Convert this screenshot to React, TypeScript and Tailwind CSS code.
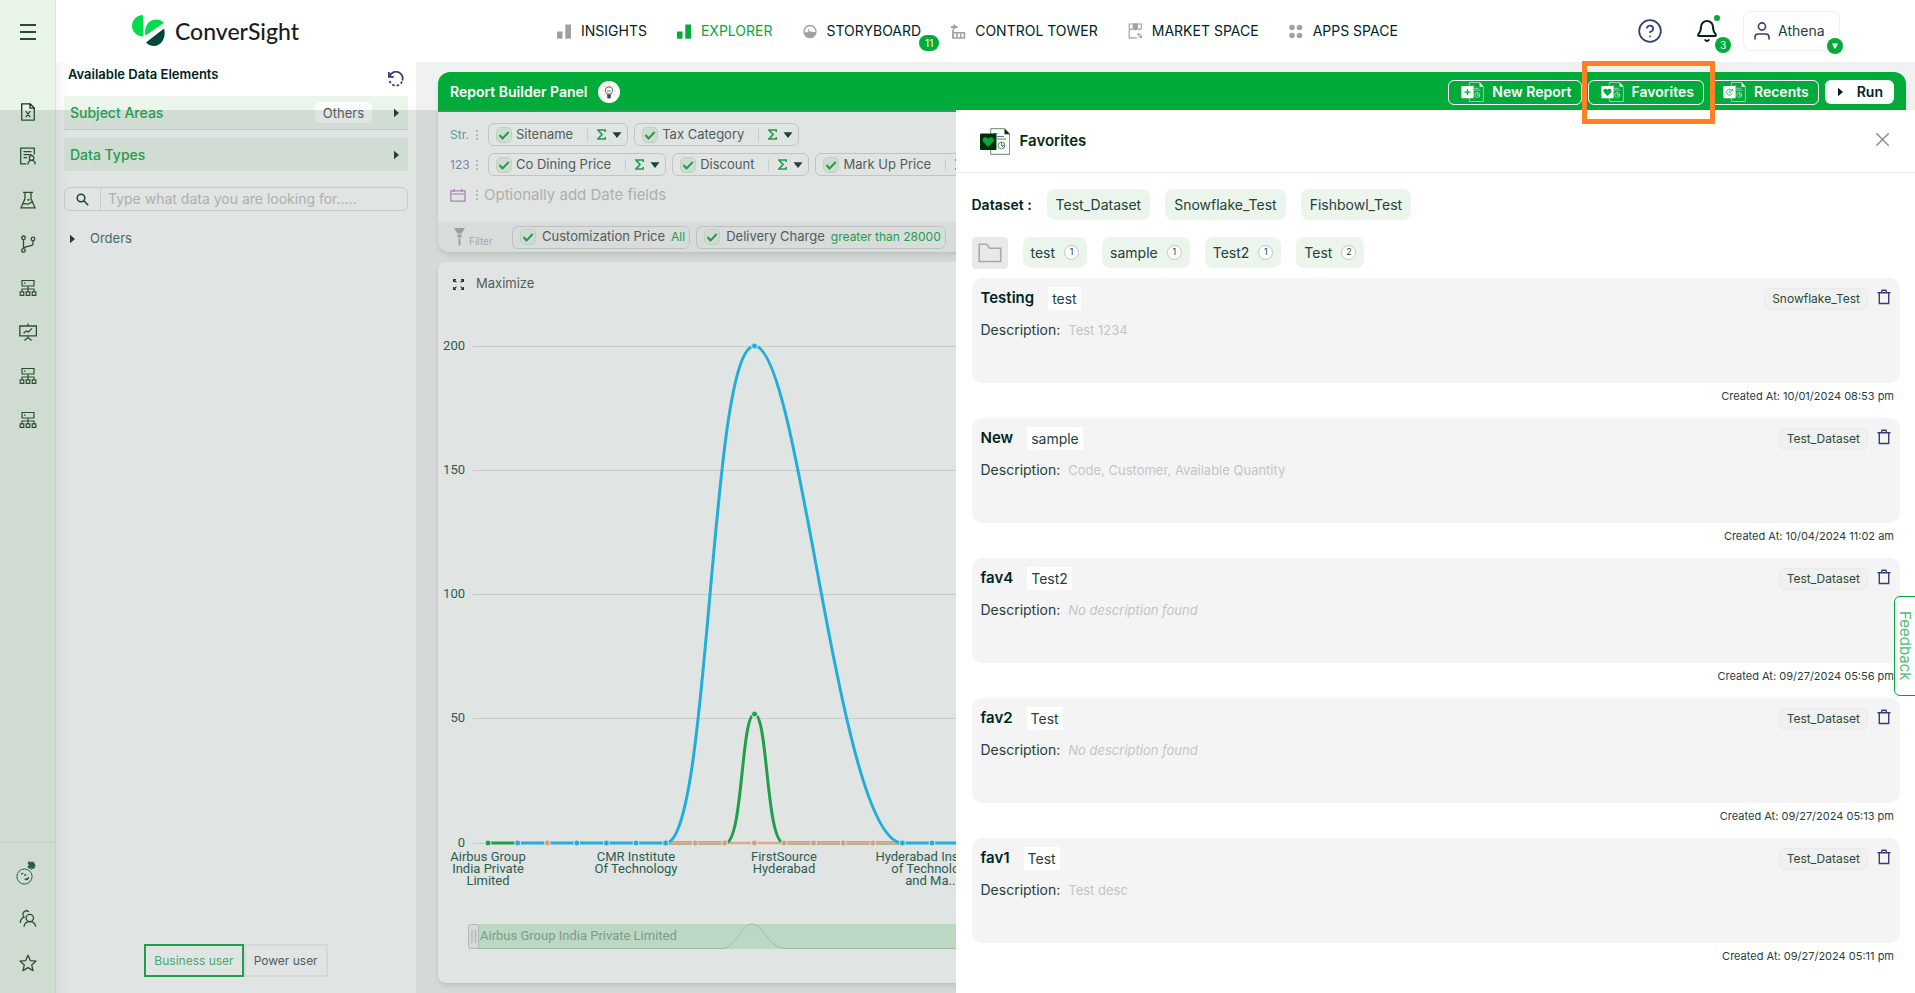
import React from 'react';
import clsx from 'clsx';
import { Bell, CircleHelp, X } from 'lucide-react';

interface Favorite {
  name: string;
  folder: string;
  description?: string;
  dataset: string;
  createdAt: string;
}

const FAVORITES: Favorite[] = [
  { name: 'Testing', folder: 'test', description: 'Test 1234', dataset: 'Snowflake_Test', createdAt: '10/01/2024 08:53 pm' },
  { name: 'New', folder: 'sample', description: 'Code, Customer, Available Quantity', dataset: 'Test_Dataset', createdAt: '10/04/2024 11:02 am' },
  { name: 'fav4', folder: 'Test2', dataset: 'Test_Dataset', createdAt: '09/27/2024 05:56 pm' },
  { name: 'fav2', folder: 'Test', dataset: 'Test_Dataset', createdAt: '09/27/2024 05:13 pm' },
  { name: 'fav1', folder: 'Test', description: 'Test desc', dataset: 'Test_Dataset', createdAt: '09/27/2024 05:11 pm' },
];

const DATASETS = ['Test_Dataset', 'Snowflake_Test', 'Fishbowl_Test'];

const FOLDERS = [
  { name: 'test', count: 1 },
  { name: 'sample', count: 1 },
  { name: 'Test2', count: 1 },
  { name: 'Test', count: 2 },
];

/* ---------- icons ---------- */

function Svg({ size = 18, children }: { size?: number; children: React.ReactNode }) {
  return (
    <svg width={size} height={size} viewBox="0 0 18 18" fill="none" stroke="currentColor" strokeWidth="1.3" aria-hidden="true">
      {children}
    </svg>
  );
}

const FileXIcon = () => (
  <Svg>
    <path d="M2.7.9h8.6l4 4v12.2H2.7z M11 1v4.2h4.2 M6.8 8.2l4.4 6 M11.2 8.2l-4.4 6" />
  </Svg>
);

const ReportUserIcon = () => (
  <Svg>
    <path d="M7.5 16.8H1.7V1.2h13.6v6.3 M4.5 4.6h8 M4.5 7.6h8 M4.5 10.7h3.5" />
    <circle cx="12.6" cy="11" r="2.3" />
    <path d="M9 17.4c.1-2.6 1.6-4 3.6-4s3.5 1.4 3.7 4" />
  </Svg>
);

const FlaskIcon = () => (
  <Svg>
    <path d="M4 1.4h10 M6 1.5v6L2 16.8h14l-4-9.300v-6 M4.4 13.2c2.3-1.5 3.5.6 5.4-.3 1.4-.7 2-1.8 3.7-1.8" />
    <circle cx="9.5" cy="8.8" r=".5" fill="currentColor" />
  </Svg>
);

const BranchIcon = () => (
  <Svg>
    <circle cx="4.5" cy="2.8" r="1.8" />
    <circle cx="4.5" cy="15.4" r="1.8" />
    <circle cx="14" cy="4" r="1.8" />
    <path d="M4.5 4.7v8.8 M14 5.9v3c0 1-.6 1.3-1.5 1.5l-8 2.2" />
  </Svg>
);

const ServerTreeIcon = () => (
  <Svg>
    <g strokeWidth="1.2">
      <path d="M3 1.5h12v5.500H3z M9 7v5.500 M3 12.500v-2.500h12v2.500 M1.2 12.800h3.600v3.600H1.200z M7.200 12.800h3.600v3.600H7.200z M13.200 12.800h3.600v3.600h-3.600z" />
      <path d="M5 4.2h1.5" />
    </g>
  </Svg>
);

const BoardIcon = () => (
  <Svg>
    <path d="M.8 3h16.6v9.8H.8z M9 .6V3 M9 13v1.5 M5.4 17.5l3.6-3 3.6 3" />
    <path d="M4.6 10.2l2.8-2.4 1.8 1.4 3.8-3.8" />
  </Svg>
);

const TeamIcon = () => (
  <Svg>
    <circle cx="10.8" cy="8" r="3.7" />
    <path d="M5 16.8c.3-3.3 2.7-5.1 5.8-5.1s5.5 1.8 5.8 5.1 M9.8 1.8C7.5-.4 3.8 1.2 3.9 4.4c0 1.3.5 2.1 1.2 2.7C2.7 8 1.4 10 1.2 13" />
  </Svg>
);

const StarIcon = () => (
  <Svg>
    <path d="M9 1.3l2.300 5.300 5.800.5-4.400 3.800 1.300 5.700L9 13.600l-5 3 1.300-5.700L.9 7.100l5.800-.5z" strokeLinejoin="round" />
  </Svg>
);

const ChefIcon = () => (
  <svg width="20" height="24" viewBox="0 0 20 24" fill="none" stroke="#0a4a40" strokeWidth="1" aria-hidden="true">
    <circle cx="8.5" cy="15.5" r="7.6" />
    <path d="M12 1.2h5.500l.8 2 1 1-1 1.300.2 1.200-1.200.8-5-1.500.8-2.200z" fill="#0a4a40" />
    <path d="M11.5 6l4.5 2.5" />
    <path d="M5.5 13.500c.2-1.300 1.200-1.500 1.700-.6 M8.500 14.800c.2-1.300 1.200-1.500 1.700-.6 M9.300 18.300c1.200.6 2.700 0 3.200-1.500z" strokeWidth="1.2" />
  </svg>
);

/** Sheet of paper with a square badge in front of it. */
function ReportGlyph({ badge, className, paper, line, square, mark }: {
  badge: 'plus' | 'heart' | 'clock';
  className: string;
  paper: string;
  line: string;
  square: string;
  mark: string;
}) {
  return (
    <svg className={className} viewBox="0 0 30 27" fill="none" aria-hidden="true">
      <path d="M10.7.7h14l5 5.300v20.300h-19z" fill={paper} stroke={line} strokeWidth="1" />
      <path d="M24.5.5v5.800h5.200z" fill={square} />
      <path d="M13.5 5.5h4 M17 8.5h7 M17 11h9" stroke={line} strokeWidth="1" />
      <circle cx="21.5" cy="17.5" r="3.4" stroke={line} strokeWidth="1" />
      <path d="M21.5 14v3.5H25 M21.5 17.5l2.4 2.4" stroke={line} strokeWidth="1" />
      <rect x="0" y="5.5" width="16.5" height="16.5" rx="1" fill={square} />
      {badge === 'heart' && (
        <path d="M8.2 18.8L3.6 14.2c-1.6-1.7-1-4.6 1.300-5 1.500-.2 2.600.5 3.300 1.500.7-1 1.800-1.700 3.300-1.500 2.300.4 2.900 3.300 1.300 5z" fill={mark} />
      )}
      {badge === 'plus' && <path d="M8.2 9.5v8.5 M4 13.7h8.5" stroke={mark} strokeWidth="1.8" />}
      {badge === 'clock' && (
        <path d="M11.5 11.2a4 4 0 1 0 .6 4 M12.4 9.3v2.600H9.8 M8 11.5v2.500h2" stroke={mark} strokeWidth="1.1" />
      )}
    </svg>
  );
}

function BarsIcon() {
  return (
    <svg width="15" height="15" viewBox="0 0 15 15" fill="currentColor" aria-hidden="true">
      <path d="M0 7.5h5.500v7.200H0z" />
      <path d="M8.3.5h5.700v14.200H8.300z" />
    </svg>
  );
}

function GaugeIcon() {
  return (
    <svg width="15" height="15" viewBox="0 0 15 15" aria-hidden="true">
      <circle cx="7" cy="7.5" r="6" fill="none" stroke="currentColor" strokeWidth="1.3" />
      <path d="M.9 8.3h4.400l-.4-4 2 3.300 6.200.7c0 3.500-2.500 5.600-6.100 5.600S.9 11.800.9 8.300z" fill="currentColor" />
    </svg>
  );
}

function TowerIcon() {
  return (
    <svg width="15" height="15" viewBox="0 0 15 15" fill="none" stroke="currentColor" aria-hidden="true">
      <path d="M0 3h6.5 M3.3.5V5" strokeWidth="2" />
      <path d="M2.2 5v9h11.200V8.800H2.200" strokeWidth="1.6" />
      <path d="M6 9v5 M9.7 9v5 M2 7v7" strokeWidth="1.5" />
    </svg>
  );
}

function MarketIcon() {
  return (
    <svg width="15" height="16" viewBox="0 0 15 16" fill="none" stroke="currentColor" strokeWidth="1.2" aria-hidden="true">
      <path d="M1.3 1h12v4.500c-1.400 1.500-3 1.300-3.800 0-1 1.400-3.200 1.400-4.200 0-1 1.300-2.900 1.300-4 0z" />
      <path d="M5.5 1h3.600l.4 4.500-2.200 1-2.200-1z" fill="currentColor" />
      <path d="M1.2 6.5v8.300H8.8" />
      <circle cx="10.5" cy="11.2" r=".6" />
      <circle cx="13" cy="14" r=".6" />
      <path d="M13.3 11l-3 3.5" strokeWidth="1" />
    </svg>
  );
}

function AppsIcon() {
  return (
    <svg width="15" height="15" viewBox="0 0 15 15" fill="currentColor" aria-hidden="true">
      <circle cx="3" cy="3.5" r="2.8" />
      <circle cx="10.5" cy="3.5" r="2.8" />
      <circle cx="3" cy="11.5" r="2.8" />
      <circle cx="10.5" cy="11.5" r="2.8" />
    </svg>
  );
}

const UserIcon = () => (
  <svg width="16" height="18" viewBox="0 0 16 18" fill="none" stroke="#353d76" strokeWidth="1.6" aria-hidden="true">
    <circle cx="8" cy="4.5" r="3.6" />
    <path d="M1 17.5v-2.300c0-2 1.400-3.200 3.300-3.200h7.400c1.900 0 3.300 1.200 3.300 3.200v2.300" />
  </svg>
);

const TrashIcon = () => (
  <svg width="14" height="16" viewBox="0 0 14 16" fill="none" stroke="#353d76" strokeWidth="1.4" aria-hidden="true">
    <path d="M.5 3.7h13 M4.5 3.5l.6-2.300h3.800l.6 2.300 M2.3 3.7v10.800h9.400V3.700" />
  </svg>
);

const Caret = ({ right }: { right?: boolean }) => (
  <svg width="10" height="10" viewBox="0 0 10 10" fill="#00241f" aria-hidden="true">
    {right ? <path d="M2 .8L7 5 2 9.2z" /> : <path d="M.5 2.2h9L5 8z" />}
  </svg>
);

const Dots = () => (
  <svg width="2" height="10" viewBox="0 0 2 10" fill="#c2c2c2" aria-hidden="true">
    <path d="M0 0h2v2H0z M0 4h2v2H0z M0 8h2v2H0z" />
  </svg>
);

const CheckBadge = () => (
  <svg width="16" height="16" viewBox="0 0 16 16" fill="none" aria-hidden="true">
    <rect x=".5" y=".5" width="15" height="15" rx="4.5" fill="#eaf5ea" stroke="#cfe6d3" />
    <path d="M3.5 8l3 3.5L12.7 5" stroke="#00a136" strokeWidth="2" />
  </svg>
);

/* ---------- shell ---------- */

const RAIL = [
  { label: 'Excel reports', Icon: FileXIcon },
  { label: 'Reports', Icon: ReportUserIcon },
  { label: 'Lab', Icon: FlaskIcon },
  { label: 'Flows', Icon: BranchIcon },
  { label: 'Servers', Icon: ServerTreeIcon },
  { label: 'Presentations', Icon: BoardIcon },
  { label: 'Clusters', Icon: ServerTreeIcon },
  { label: 'Nodes', Icon: ServerTreeIcon },
];

function Rail() {
  return (
    <aside className="flex w-14 shrink-0 flex-col border-r border-[#d8e6da] bg-[#eaf5ea] text-[#0a3a10]">
      <button type="button" aria-label="Menu" className="mx-auto mt-6 flex h-4 w-4 flex-col justify-between">
        <span className="h-[2px] w-full bg-[#2c4a30]" />
        <span className="h-[2px] w-full bg-[#2c4a30]" />
        <span className="h-[2px] w-full bg-[#2c4a30]" />
      </button>
      <nav className="mt-[50px] flex flex-col">
        {RAIL.map(({ label, Icon }) => (
          <button key={label} type="button" aria-label={label} className="flex h-11 items-center justify-center">
            <Icon />
          </button>
        ))}
      </nav>
      <div className="mt-auto flex flex-col border-t border-[#d8e6da] pt-2 pb-[10px]">
        <button type="button" aria-label="Assistant" className="flex h-11 items-center justify-center pr-1">
          <ChefIcon />
        </button>
        <button type="button" aria-label="Team" className="flex h-12 items-center justify-center">
          <TeamIcon />
        </button>
        <button type="button" aria-label="Starred" className="flex h-10 items-center justify-center">
          <StarIcon />
        </button>
      </div>
    </aside>
  );
}

const NAV = [
  { label: 'INSIGHTS', Icon: BarsIcon },
  { label: 'EXPLORER', Icon: BarsIcon, active: true },
  { label: 'STORYBOARD', Icon: GaugeIcon, badge: 11 },
  { label: 'CONTROL TOWER', Icon: TowerIcon },
  { label: 'MARKET SPACE', Icon: MarketIcon },
  { label: 'APPS SPACE', Icon: AppsIcon },
];

function Header() {
  return (
    <header className="flex h-[62px] shrink-0 items-center bg-white pr-[75px]">
      <div className="flex w-[501px] items-center gap-[10px] pl-[76px]">
        <svg width="33" height="32" viewBox="0 0 33 32" aria-hidden="true">
          <path d="M11 0v21.5C5 21.5 0 16.8 0 10.8S5 0 11 0z" fill="#00dc4b" />
          <path d="M13.5 20.5c-1.800-7.500 2.300-16 10.300-16 3.300 0 6.300 1.200 8.200 3.300z" fill="#00dc4b" />
          <path d="M14 27.5L32 13.5c2.500 8-2 17.500-10 17.500-3.200 0-6-1.200-8-3.500z" fill="#00463a" />
        </svg>
        <span className="font-['Lato',sans-serif] text-[23px] leading-8 font-medium text-[#1c1c1e]">ConverSight</span>
      </div>
      <nav className="flex items-center gap-[30px]">
        {NAV.map(({ label, Icon, active, badge }) => (
          <a
            key={label}
            href="#"
            className={clsx('relative flex items-center gap-[9px] text-sm', active ? 'text-[#00ab39]' : 'text-[#00241f]')}
          >
            <span className={active ? 'text-[#00ab39]' : 'text-[#a3a0a1]'}>
              <Icon />
            </span>
            {label}
            {badge && (
              <span className="absolute top-[14px] -right-[18px] flex h-4 w-5 items-center justify-center rounded-full bg-[#00ab39] text-[10px] text-white">
                {badge}
              </span>
            )}
          </a>
        ))}
      </nav>
      <div className="ml-auto flex items-center">
        <button type="button" aria-label="Help" className="text-[#353d76]">
          <CircleHelp size={26} strokeWidth={1.6} />
        </button>
        <button type="button" aria-label="Notifications" className="relative ml-8 text-[#00241f]">
          <Bell size={24} strokeWidth={2} />
          <span className="absolute -top-[4px] -right-[1px] h-[6px] w-[6px] rounded-full bg-[#00ab39]" />
          <span className="absolute top-[18px] -right-[12px] flex h-4 w-4 items-center justify-center rounded-full bg-[#00ab39] text-[10px] text-white">3</span>
        </button>
        <button type="button" className="relative ml-6 flex h-10 w-[97px] items-center gap-2 rounded-lg border border-[#efefef] pl-[10px] text-sm text-[#26403d]">
          <UserIcon />
          Athena
          <span className="absolute top-[26px] -right-[4px] flex h-4 w-4 items-center justify-center rounded-full bg-[#00ab39]">
            <svg width="6" height="6" viewBox="0 0 6 6" fill="#fff" aria-hidden="true"><path d="M0 .5h6L3.5 5.5h-1z" /></svg>
          </span>
        </button>
      </div>
    </header>
  );
}

function DataPanel() {
  return (
    <section className="flex w-[360px] shrink-0 flex-col bg-gradient-to-r from-[#f4f4f4] via-white via-[4%] to-white px-2 text-[#00241f]">
      <div className="flex h-[34px] items-center justify-between pr-1 pl-1">
        <h2 className="pb-2 text-[13px] font-semibold">Available Data Elements</h2>
        <button type="button" aria-label="Reset" className="pl-px">
          <svg width="16" height="16" viewBox="0 0 16 16" fill="none" stroke="#353d76" strokeWidth="1.8" aria-hidden="true">
            <path d="M1.8 5.2A6.5 6.5 0 0 1 14.3 9.5" />
            <path d="M14 10.5A6.5 6.5 0 0 1 1.7 10" strokeDasharray="2.5 2" />
            <path d="M.9 1v4.9h5" />
          </svg>
        </button>
      </div>
      <div className="flex h-[34px] items-center border-b border-[#d3dfd5] bg-[#ebf5eb] px-[6px]">
        <span className="text-sm font-medium text-[#00a136]">Subject Areas</span>
        <button type="button" className="mr-5 ml-auto h-[21px] rounded-md bg-white px-2 text-[13px] leading-5 text-[#3f4b49]">
          Others
        </button>
        <Caret right />
      </div>
      <div className="mt-2 flex h-[33px] items-center justify-between bg-[#ebf5eb] px-[6px]">
        <span className="text-sm font-medium text-[#00a136]">Data Types</span>
        <Caret right />
      </div>
      <label className="mt-4 flex h-6 items-center rounded-md border border-[#dcdcdc]">
        <span className="flex h-full w-9 items-center justify-center border-r border-[#dcdcdc] text-[#00241f]">
          <svg width="13" height="13" viewBox="0 0 13 13" fill="none" stroke="currentColor" strokeWidth="1.5" aria-hidden="true">
            <circle cx="5" cy="5" r="3.8" />
            <path d="M7.8 7.8l4.4 4.4" />
          </svg>
        </span>
        <input
          aria-label="Search data elements"
          placeholder="Type what data you are looking for....."
          className="min-w-0 flex-1 bg-transparent px-[7px] text-sm outline-none placeholder:text-[#bababa]"
        />
      </label>
      <button type="button" className="mt-[18px] flex h-5 items-center gap-3 pl-1 text-[13px] text-[#2d5a5a]">
        <Caret right />
        Orders
      </button>
      <div className="mt-auto mb-4 flex justify-center">
        <button type="button" className="h-[33px] border-2 border-[#00a136] px-2 text-xs text-[#2fb45d]">Business user</button>
        <button type="button" className="h-[33px] border-2 border-[#efefef] px-2 text-xs text-[#3f4b49]">Power user</button>
      </div>
    </section>
  );
}

function FieldChip({ label }: { label: string }) {
  return (
    <div className="flex h-[23px] shrink-0 items-center rounded-md border border-[#d5d5d5] pr-[5px] pl-[7px]">
      <CheckBadge />
      <span className="ml-1 text-[13px] text-[#3f4b49]">{label}</span>
      <span className="ml-[14px] h-3 w-px bg-[#dcdcdc]" />
      <button type="button" aria-label={`Aggregate ${label}`} className="ml-[9px] flex items-center gap-[6px]">
        <svg width="9" height="11" viewBox="0 0 9 11" fill="none" stroke="#00a136" strokeWidth="1.7" aria-hidden="true">
          <path d="M8.3 3V1H1l4 4.5-4 4.5h7.300V8" />
        </svg>
        <Caret />
      </button>
    </div>
  );
}

function FilterChip({ label, condition }: { label: string; condition: string }) {
  return (
    <div className="flex h-[23px] shrink-0 items-center rounded-md border border-[#d0d0d0] pr-1 pl-[7px] text-[13px]">
      <CheckBadge />
      <span className="ml-[6px] text-[#3f4b49]">{label}</span>
      <span className="ml-[6px] text-xs text-[#00a136]">{condition}</span>
    </div>
  );
}

function OutlineButton({ badge, children }: { badge: 'plus' | 'heart' | 'clock'; children: React.ReactNode }) {
  return (
    <button type="button" className="flex h-[25px] items-center gap-2 rounded-md border border-white pr-[9px] pl-3 text-sm font-semibold text-white">
      <ReportGlyph badge={badge} className="h-5 w-[23px]" paper="none" line="#b5e5c3" square="#fff" mark="#00ab39" />
      {children}
    </button>
  );
}

function ReportBuilder() {
  return (
    <section className="rounded-xl bg-white shadow-md">
      <div className="flex h-10 items-center gap-[11px] rounded-t-xl bg-[#00ab39] px-3">
        <h2 className="text-sm font-semibold text-white">Report Builder Panel</h2>
        <span className="flex h-[22px] w-[22px] items-center justify-center rounded-full bg-white">
          <svg width="14" height="16" viewBox="0 0 14 16" fill="none" aria-hidden="true">
            <circle cx="7" cy="6.5" r="3.6" stroke="#777" strokeWidth="1.1" />
            <path d="M5 7h4" stroke="#777" />
            <path d="M5 10.5h4l-.5 4h-3z" fill="#444" />
            <path d="M7 0v1.5 M2 2l1 1 M12 2l-1 1 M0 7h1.5 M12.5 7H14 M1.5 11l1-.7 M12.5 11l-1-.7" stroke="#f3a978" />
          </svg>
        </span>
        <div className="ml-auto flex items-center gap-[6px]">
          <OutlineButton badge="plus">New Report</OutlineButton>
          <div className="relative">
            <OutlineButton badge="heart">Favorites</OutlineButton>
            <span className="pointer-events-none absolute -top-[19px] -right-[11px] -bottom-[19px] -left-[6px] z-50 border-5 border-[#ff8026]" />
          </div>
          <OutlineButton badge="clock">Recents</OutlineButton>
          <button type="button" className="flex h-6 items-center gap-[11px] rounded-md bg-white px-[11px] text-sm font-semibold text-[#00241f]">
            <Caret right />
            Run
          </button>
        </div>
      </div>
      <div className="flex h-[110px] flex-col gap-[7px] pt-[11px] pl-3">
        <div className="flex h-[23px] items-center gap-[6px]">
          <span className="w-5 text-xs text-[#4d98a5]">Str.</span>
          <Dots />
          <div className="ml-1 flex gap-[6px]">
            <FieldChip label="Sitename" />
            <FieldChip label="Tax Category" />
          </div>
        </div>
        <div className="flex h-[23px] items-center gap-[6px]">
          <span className="w-5 text-xs text-[#7d82b8]">123</span>
          <Dots />
          <div className="ml-1 flex gap-[6px]">
            <FieldChip label="Co Dining Price" />
            <FieldChip label="Discount" />
            <FieldChip label="Mark Up Price" />
          </div>
        </div>
        <div className="flex h-6 items-center gap-[6px]">
          <span className="w-5">
            <svg width="16" height="13" viewBox="0 0 16 13" fill="none" stroke="#b57cc4" strokeWidth="1.2" aria-hidden="true">
              <path d="M.8 1.8h14.200v10.400H.8z M.8 5h14.200 M4 0v3 M11.8 0v3" />
            </svg>
          </span>
          <Dots />
          <span className="text-[15px] text-[#bababa]">Optionally add Date fields</span>
        </div>
      </div>
      <div className="flex h-[30px] items-center gap-[6px] rounded-b-xl bg-[#f4f4f4] pl-4">
        <div className="flex w-[52px] items-center text-[10px] text-[#b0b0b0]">
          <svg width="11" height="18" viewBox="0 0 11 18" fill="#a3a3a3" aria-hidden="true">
            <path d="M0 0h11L7.5 5.5h-4z M3.5 6.5h4v3h-4z M4.5 10.5h2v7h-2z" />
          </svg>
          <span className="pt-2 pl-1">Filter</span>
        </div>
        <FilterChip label="Customization Price" condition="All" />
        <FilterChip label="Delivery Charge" condition="greater than 28000" />
      </div>
    </section>
  );
}

/* ---------- chart ---------- */

const ORIGIN = 50;
const STEP = 29.6;
const BASE = 581;

const Y_TICKS = [
  { value: 200, y: 84 },
  { value: 150, y: 208 },
  { value: 100, y: 332 },
  { value: 50, y: 456 },
  { value: 0, y: BASE },
];

const X_LABELS = [
  { at: 0, lines: ['Airbus Group', 'India Private', 'Limited'] },
  { at: 5, lines: ['CMR Institute', 'Of Technology'] },
  { at: 10, lines: ['FirstSource', 'Hyderabad'] },
  { at: 15, lines: ['Hyderabad Institute', 'of Technology', 'and Ma...'] },
];

const MARKERS = Array.from({ length: 17 }, (_, i) => {
  if (i === 0) return '#00a136';
  if (i === 2 || (i >= 7 && i <= 13)) return '#eda673';
  return '#00b8f4';
});

function SalesChart() {
  const px = (i: number) => ORIGIN + i * STEP;

  return (
    <svg width="100%" height="700" className="block" role="img" aria-label="Price by site" fontFamily="Roboto, sans-serif" fontSize="13">
      {Y_TICKS.map((tick) => (
        <g key={tick.value}>
          <text x="27" y={tick.y + 4} textAnchor="end" fill="#0a4a40">{tick.value}</text>
          <line x1="35" x2="100%" y1={tick.y} y2={tick.y} stroke="#d9dcdb" shapeRendering="crispEdges" />
        </g>
      ))}
      <line x1={px(0)} x2={px(1)} y1={BASE} y2={BASE} stroke="#00a136" strokeWidth="3" />
      <line x1={px(6)} x2={px(8)} y1={BASE} y2={BASE} stroke="#a9c292" strokeWidth="4" />
      <line x1={px(10)} x2={px(14)} y1={BASE} y2={BASE} stroke="#a9c292" strokeWidth="4" />
      <line x1={px(6)} x2={px(14)} y1={BASE} y2={BASE} stroke="#fbb08a" strokeWidth="2.5" />
      <path d="M287.5 581C305 581 303 452 316.5 452S328 581 346 581" fill="none" stroke="#00a136" strokeWidth="3" />
      <path
        d="M79.6 581H227.6C273 581 271 84 316.5 84C362.5 84 400 581 464.5 581H530"
        fill="none"
        stroke="#00b8f4"
        strokeWidth="3"
      />
      {MARKERS.map((color, i) => (
        <circle key={i} cx={px(i)} cy={BASE} r="3" fill={color} stroke="#fff" strokeWidth="1" />
      ))}
      <circle cx="316.5" cy="84" r="3" fill="#00b8f4" stroke="#fff" />
      <circle cx="316.5" cy="452" r="3" fill="#00a136" stroke="#fff" />
      {X_LABELS.map((label) => (
        <text key={label.at} y="587" textAnchor="middle" fill="#0a4a40">
          {label.lines.map((line) => (
            <tspan key={line} x={px(label.at)} dy="12">{line}</tspan>
          ))}
        </text>
      ))}
      <rect x="35" y="662" width="100%" height="25" fill="#cfeed6" />
      <path d="M35 686.5H284C298 686.5 303 662 314 662S331 686.5 347 686.5H2000" fill="none" stroke="#a9c7b2" />
      <rect x="30.5" y="662.5" width="10" height="24" rx="2" fill="#f2f2f2" stroke="#c2c2c2" />
      <path d="M34 668v13 M37.5 668v13" stroke="#b5b5b5" />
      <text x="42" y="678" fill="#7c9c88">Airbus Group India Private Limited</text>
    </svg>
  );
}

function ChartCard() {
  return (
    <section className="relative flex-1 overflow-hidden rounded-lg bg-white shadow-md">
      <button type="button" className="absolute top-3 left-[15px] flex h-5 items-center gap-3 text-[13px] text-[#3f4b49]">
        <svg width="11" height="11" viewBox="0 0 11 11" fill="none" stroke="#00241f" strokeWidth="1.2" aria-hidden="true">
          <path d="M.6 3V.6H3 M.6.6l2.800 2.800 M8 .6h2.400V3 M10.4.6L7.6 3.400 M.6 8v2.400H3 M.6 10.4l2.800-2.800 M10.4 8v2.400H8 M10.4 10.4L7.6 7.600" />
        </svg>
        Maximize
      </button>
      <SalesChart />
    </section>
  );
}

/* ---------- favorites drawer ---------- */

function FavoriteCard({ favorite }: { favorite: Favorite }) {
  return (
    <li className="flex h-[140px] flex-col">
      <article className="h-[105px] rounded-[10px] bg-[#f4f4f4] px-[9px] pt-[9px]">
        <div className="flex h-[23px] items-center">
          <h3 className="text-[15px] font-semibold text-[#00241f]">{favorite.name}</h3>
          <span className="ml-[14px] h-[23px] bg-white px-1 text-sm leading-[23px] text-[#26403d]">{favorite.folder}</span>
          <span className="ml-auto h-[22px] rounded-md border border-[#eaeaea] bg-[#f0f0f0] px-[7px] text-xs leading-5 text-[#2c4a34]">
            {favorite.dataset}
          </span>
          <button type="button" aria-label={`Delete ${favorite.name}`} className="ml-[9px] pb-[3px]">
            <TrashIcon />
          </button>
        </div>
        <p className="mt-[10px] flex h-5 items-center gap-2 text-sm text-[#26403d]">
          Description:
          {favorite.description ? (
            <span className="text-[13px] text-[#c4c4c4]">{favorite.description}</span>
          ) : (
            <em className="text-[13px] text-[#c4c4c4]">No description found</em>
          )}
        </p>
      </article>
      <p className="mt-[5px] pr-[6px] text-right text-[11px] leading-4 text-[#26403d]">Created At: {favorite.createdAt}</p>
    </li>
  );
}

function FavoritesDrawer() {
  return (
    <aside className="flex w-[calc(50%+2px)] flex-col bg-white">
      <header className="flex h-[63px] shrink-0 items-center border-b border-[#ececec] px-6">
        <ReportGlyph badge="heart" className="h-[27px] w-[30px]" paper="#fff" line="#5f8a66" square="#002e0c" mark="#00ab39" />
        <h2 className="ml-[10px] text-[15px] font-semibold text-[#002e0c]">Favorites</h2>
        <button type="button" aria-label="Close" className="-mr-[3px] ml-auto pb-1 text-[#8c8c8c]">
          <X size={23} strokeWidth={1.5} />
        </button>
      </header>
      <div className="flex flex-col pr-[15px] pl-4">
        <div className="mt-4 flex h-[31px] items-center gap-[15px] text-sm">
          <span className="font-semibold text-[#00241f]">Dataset :</span>
          {DATASETS.map((name) => (
            <button key={name} type="button" className="h-[31px] rounded-lg bg-[#ebf5eb] px-[9px] text-[#26403d]">
              {name}
            </button>
          ))}
        </div>
        <div className="mt-4 flex h-[33px] items-center gap-[15px] text-sm">
          <button type="button" aria-label="All folders" className="flex h-8 w-9 items-center justify-center rounded bg-[#e9e9e9]">
            <svg width="24" height="20" viewBox="0 0 24 20" fill="none" stroke="#a8a8a8" strokeWidth="1.6" aria-hidden="true">
              <path d="M1.2 18.5V1.2h7.300l3.200 4h11v13.300z" />
            </svg>
          </button>
          {FOLDERS.map((folder) => (
            <button key={folder.name} type="button" className="flex h-[31px] items-center gap-[9px] rounded-lg bg-[#ebf5eb] px-2 text-[#26403d]">
              {folder.name}
              <span className="flex h-[15px] w-[15px] items-center justify-center rounded-full border border-[#c4c4c4] bg-white text-[9px]">
                {folder.count}
              </span>
            </button>
          ))}
        </div>
        <ul className="mt-[9px]">
          {FAVORITES.map((favorite) => (
            <FavoriteCard key={favorite.name} favorite={favorite} />
          ))}
        </ul>
      </div>
    </aside>
  );
}

export default function App() {
  return (
    <div className="relative flex h-screen overflow-hidden bg-[#f0f1f1] font-['Inter',sans-serif]">
      <Rail />
      <div className="flex min-w-0 flex-1 flex-col">
        <Header />
        <div className="flex min-h-0 flex-1">
          <DataPanel />
          <main className="flex min-w-0 flex-1 flex-col gap-[10px] pt-[10px] pr-[9px] pb-[10px] pl-[22px]">
            <ReportBuilder />
            <ChartCard />
          </main>
        </div>
      </div>
      <div className="absolute inset-x-0 top-[110px] bottom-0 z-10 flex justify-end bg-[#82948c]/25">
        <FavoritesDrawer />
      </div>
      <button
        type="button"
        className="absolute top-[596px] -right-px z-20 flex h-[100px] w-[22px] items-center justify-center rounded-l-md border border-[#00a136] bg-white text-[15px] text-[#4fbd73] [writing-mode:vertical-rl]"
      >
        Feedback
      </button>
    </div>
  );
}
